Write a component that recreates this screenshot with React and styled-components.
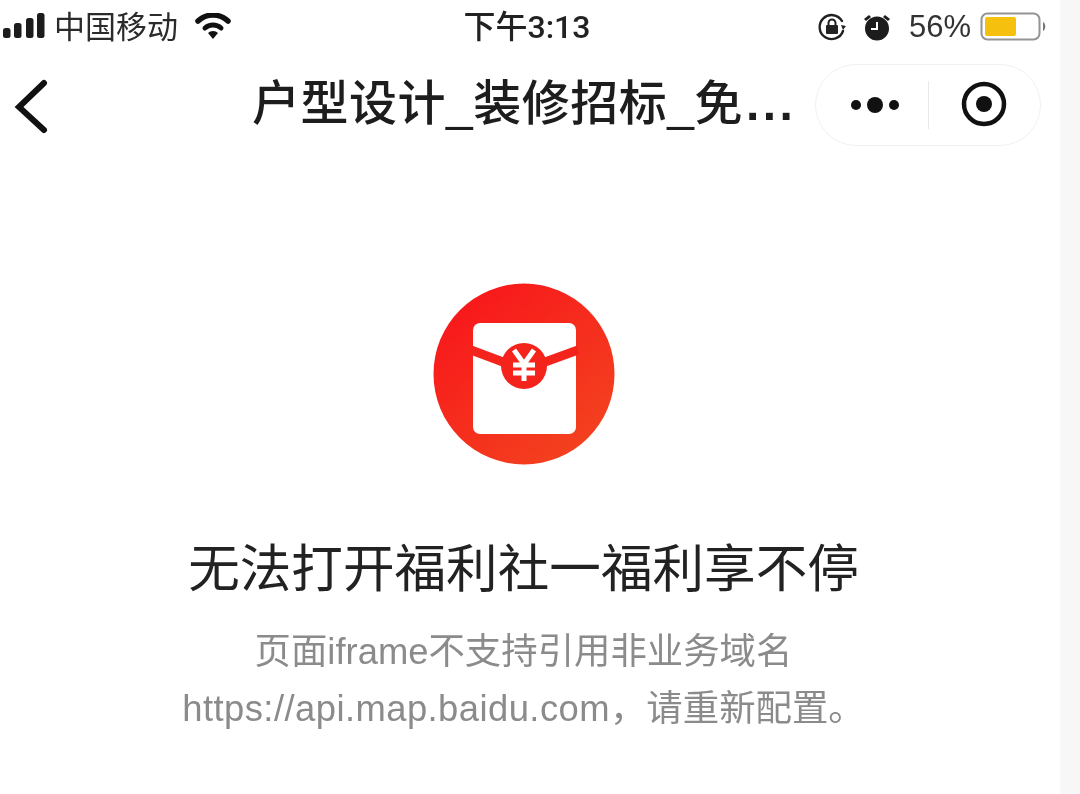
import React from "react";
import styled, { createGlobalStyle } from "styled-components";

const Global = createGlobalStyle`
  html, body { margin: 0; padding: 0; background: #f7f7f8; }
  body { font-family: "Liberation Sans", "Noto Sans CJK SC", sans-serif; }
`;
const Page = styled.div`
  width: 1080px; height: 794px; overflow: hidden;
  display: grid; grid-template-columns: 1060px 20px; background: #f7f7f8;
`;
const Phone = styled.main`
  background: #fff; display: flex; flex-direction: column; filter: blur(0.5px);
`;
const Status = styled.header`
  height: 54px; display: grid; grid-template-columns: 1fr auto 1fr; align-items: center;
  font-size: 31px; color: #2b2b2b;
`;
const StatusLeft = styled.div`display: flex; align-items: center; padding-left: 3px;`;
const Carrier = styled.span`margin: 0 0 6px 7px; width: 123px; white-space: nowrap; font-size: 31px;`;
const Wifi = styled.svg`margin-left: 18px; width: 36px; height: 28px;`;
const Clock = styled.span`
  margin-bottom: 6px; font-family: Roboto, "Noto Sans CJK SC", sans-serif; font-weight: 500;
  font-size: 32px; color: #222; transform: translateX(-3px);
`;
const StatusRight = styled.div`display: flex; align-items: center; justify-content: flex-end; padding-right: 12px;`;
const Percent = styled.span`margin-left: 18px; margin-right: 9px; font-size: 31px; color: #333;`;
const Nav = styled.nav`
  height: 100px; display: flex; align-items: center; padding: 0 19px 0 10px;
`;
const Back = styled.svg`width: 38px; height: 60px; flex: none;`;
const Title = styled.h1`
  margin: 0 0 0 204px; width: 549px; font-size: 48px; font-weight: 500; line-height: 60px;
  color: #1d1d1d; white-space: nowrap; letter-spacing: 0.5px;
`;
const Ellipsis = styled.span`letter-spacing: 3.4px; font-weight: 700; margin-left: 3px;`;
const Capsule = styled.div`
  margin-left: auto; width: 226px; height: 82px; box-sizing: border-box; border: 1px solid #f1f1f1;
  border-radius: 41px; display: grid; grid-template-columns: 1fr 1px 1fr; align-items: center;
  justify-items: center; transform: translateY(1px);
`;
const Rule = styled.span`width: 1px; height: 48px; background: #e9e9e9;`;
const Dots = styled.svg`display: block; margin-left: 8px;`;
const Target = styled.svg`display: block; margin-top: -2px;`;
const Body = styled.section`
  flex: 1; display: flex; flex-direction: column; align-items: center;
  padding: 129px 13px 0 0;
`;
const Heading = styled.h2`
  margin: 68px 0 0; font-size: 51.6px; font-weight: 400; line-height: 72px; color: #222; white-space: nowrap;
`;
const Note = styled.p`
  margin: 18px 0 0; font-size: 36.4px; line-height: 57px; color: #8b8b8b; text-align: center; white-space: nowrap;
`;
const Url = styled.span`letter-spacing: 0.44px;`;
const Gutter = styled.aside`background: #f7f7f8;`;

const SignalBars = () => (
  <svg width="44" height="28" viewBox="0 0 44 28" fill="#1c1c1c">
    <rect x="0" y="15" width="7.5" height="10" rx="2.5" />
    <rect x="11" y="10" width="7.5" height="15" rx="2.5" />
    <rect x="23" y="5" width="7.5" height="20" rx="2.5" />
    <rect x="34" y="0" width="7.5" height="25" rx="2.5" />
  </svg>
);
const AlarmLock = () => (
  <svg width="30" height="30" viewBox="0 0 30 30" fill="none" stroke="#222">
    <path d="M26 19a12 12 0 1 1-1-10" strokeWidth="2.4" strokeLinecap="round" />
    <path d="M24 13l5 1-3 4z" fill="#222" stroke="none" />
    <rect x="9" y="13" width="12" height="9" rx="1" fill="#222" stroke="none" />
    <path d="M11.5 13v-2a3.5 3.5 0 0 1 7 0v2" strokeWidth="2" />
  </svg>
);
const AlarmClock = () => (
  <svg width="28" height="28" viewBox="0 0 28 28" style={{ marginLeft: 16 }}>
    <circle cx="14" cy="15.5" r="12" fill="#1c1c1c" />
    <path d="M14 9v7H8" fill="none" stroke="#fff" strokeWidth="2" />
    <path d="M1 6l5-4 2 2-5 4zM27 6l-5-4-2 2 5 4z" fill="#1c1c1c" />
  </svg>
);
const Battery = () => (
  <svg width="68" height="30" viewBox="0 0 68 30">
    <rect x="1.5" y="1.5" width="58" height="26" rx="6" fill="#fff" stroke="#949494" strokeWidth="2" />
    <rect x="5" y="5" width="31" height="19" rx="2" fill="#f6c00f" />
    <path d="M63 10c3 1 3 8 0 9z" fill="#777" />
  </svg>
);
const Envelope = () => (
  <svg width="182" height="182" viewBox="0 0 182 182" style={{ flex: "none" }}>
    <defs>
      <linearGradient id="red" x1="0.15" y1="0.1" x2="0.85" y2="0.95">
        <stop offset="0" stopColor="#f8181b" />
        <stop offset="1" stopColor="#f3431f" />
      </linearGradient>
    </defs>
    <circle cx="91" cy="91" r="90.5" fill="url(#red)" />
    <rect x="40" y="40" width="103" height="111" rx="7" fill="#fff" />
    <path d="M38 67 L70 79" fill="none" stroke="#f4241c" strokeWidth="9" />
    <path d="M145 67 L112 79" fill="none" stroke="#f4241c" strokeWidth="9" />
    <circle cx="91" cy="83" r="23" fill="#f4241c" />
    <path d="M81 67l10 14 10-14M80 82h22M80 90h22M91 80v18" fill="none" stroke="#fff" strokeWidth="5" />
  </svg>
);

export default function App() {
  return (
    <Page>
      <Global />
      <Phone>
        <Status>
          <StatusLeft>
            <SignalBars />
            <Carrier>中国移动</Carrier>
            <Wifi viewBox="0 0 36 28">
              <path d="M3 8a22 22 0 0 1 30 0" fill="none" stroke="#111" strokeWidth="5.5" strokeLinecap="round" />
              <path d="M10 15a12 12 0 0 1 16 0" fill="none" stroke="#111" strokeWidth="5" strokeLinecap="round" />
              <path d="M13 20a7 7 0 0 1 10 0l-5 6z" fill="#111" />
            </Wifi>
          </StatusLeft>
          <Clock>下午3:13</Clock>
          <StatusRight>
            <AlarmLock />
            <AlarmClock />
            <Percent>56%</Percent>
            <Battery />
          </StatusRight>
        </Status>
        <Nav>
          <Back viewBox="0 0 38 60">
            <path d="M34 9 L9 33 L34 56" fill="none" stroke="#111" strokeWidth="6" strokeLinecap="round" />
          </Back>
          <Title>户型设计_装修招标_免<Ellipsis>...</Ellipsis></Title>
          <Capsule>
            <Dots width="52" height="20" viewBox="0 0 52 20" fill="#111">
              <circle cx="6" cy="10" r="5" />
              <circle cx="25" cy="10" r="8" />
              <circle cx="44" cy="10" r="5" />
            </Dots>
            <Rule />
            <Target width="48" height="48" viewBox="0 0 48 48">
              <circle cx="24" cy="24" r="20" fill="none" stroke="#111" strokeWidth="4.5" />
              <circle cx="24" cy="24" r="8" fill="#111" />
            </Target>
          </Capsule>
        </Nav>
        <Body>
          <Envelope />
          <Heading>无法打开福利社一福利享不停</Heading>
          <Note>
            页面iframe不支持引用非业务域名
            <br />
            <Url>https://api.map.baidu.com</Url>，请重新配置。
          </Note>
        </Body>
      </Phone>
      <Gutter />
    </Page>
  );
}
